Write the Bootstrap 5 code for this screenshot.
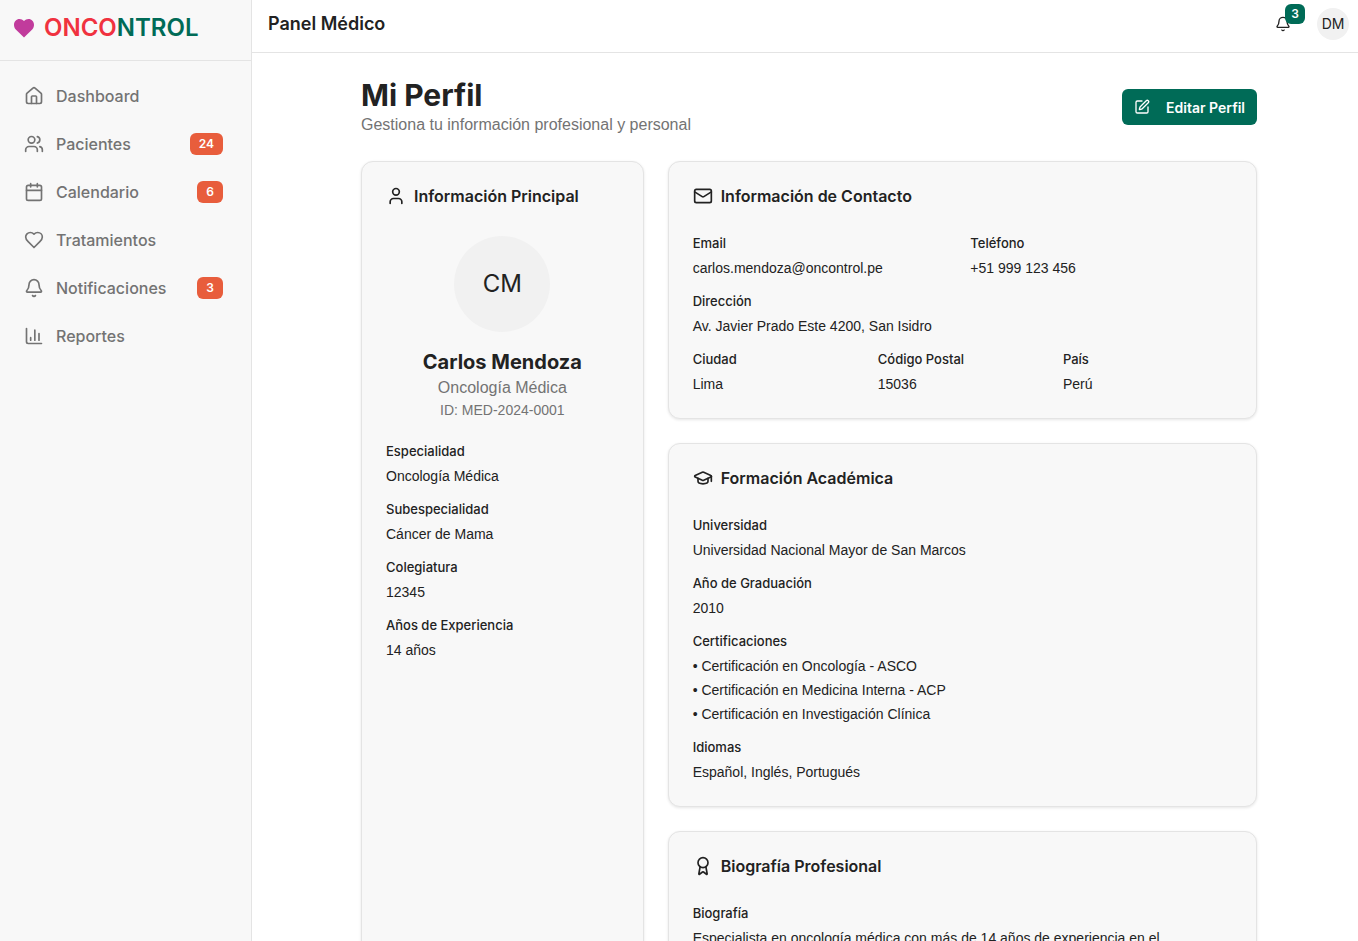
<!DOCTYPE html>
<html lang="es">
<head>
<meta charset="utf-8">
<meta name="viewport" content="width=device-width, initial-scale=1">
<title>Oncontrol · Mi Perfil</title>
<link href="https://cdn.jsdelivr.net/npm/bootstrap@5.3.0/dist/css/bootstrap.min.css" rel="stylesheet">
<style>
  :root { --ink:#222; --muted:#737373; --line:#e4e4e4; --panel:#f8f8f8; --brand:#006b57; --alert:#e85d3c; }
  body { font-family:"Liberation Sans",Arial,sans-serif; font-size:14px; line-height:20px; color:var(--ink); background:#fff; }
  h1,h2,h3,dt,.btn,.side-link,.count-pill,.logo-text { font-family:Inter,sans-serif; }
  .ico { width:20px; height:20px; flex:none; fill:none; stroke:currentColor; stroke-width:2; stroke-linecap:round; stroke-linejoin:round; }
  .ico-sm { width:16px; height:16px; }
  .sidebar { width:252px; flex:none; background:var(--panel); border-right:1px solid var(--line); }
  .logo-bar { height:61px; padding:0 12px 5px; border-bottom:1px solid var(--line); color:inherit; }
  .logo-text { font-size:24px; line-height:32px; font-weight:600; color:#f0323f; }
  .logo-text b { font-weight:inherit; color:var(--brand); }
  .side-nav { padding:15px 12px; gap:8px; }
  .side-link { height:40px; padding:0 16px 0 12px; gap:12px; font-size:16px; font-weight:500; color:var(--muted); text-decoration:none; border-radius:6px; }
  .count-pill { height:22px; padding:0 9px; font-size:12px; line-height:22px; font-weight:600; color:#fff; background:var(--alert); border-radius:6px; }
  .topbar { height:53px; padding:0 9px 5px 16px; border-bottom:1px solid var(--line); }
  .topbar h2 { font-size:18px; line-height:28px; font-weight:600; }
  .bell { width:36px; height:36px; color:var(--ink); }
  .bell .count-pill { position:absolute; top:-2px; right:-4px; height:20px; padding:0 6px; line-height:20px; background:var(--brand); }
  .avatar { background:#f1f1f1; color:var(--ink); }
  .avatar-sm { width:32px; height:32px; font-size:14px; font-family:Inter,sans-serif; }
  .avatar-lg { width:96px; height:96px; font-size:24px; font-family:Inter,sans-serif; }
  .content { padding:24px 16px 24px 24px; }
  .page-col { max-width:896px; }
  h1 { font-size:30px; line-height:36px; font-weight:700; }
  .subtitle { font-size:16px; line-height:24px; color:var(--muted); }
  .person-id { color:var(--muted); }
  .btn-edit { height:36px; padding:0 12px; gap:16px; font-size:14px; font-weight:600; color:#fff; background:var(--brand); border-radius:6px; }
  .btn-edit:hover { color:#fff; background:#005747; }
  .panel { background:var(--panel); border:1px solid var(--line); border-radius:12px; padding:24px; box-shadow:0 1px 3px rgba(0,0,0,.1); }
  .panel-title { font-size:16px; line-height:20px; font-weight:600; gap:8px; margin-bottom:27px; }
  .person { padding-top:3px; margin-bottom:21px; }
  .person h3 { font-size:20px; line-height:28px; font-weight:700; }
  dl { margin:0; }
  .stack { display:grid; gap:13px; }
  dt { font-size:13px; line-height:20px; font-weight:500; margin-bottom:5px; }
  dd { margin:0; }
  dd li + li { margin-top:4px; }
</style>
</head>
<body>
<div class="d-flex min-vh-100">
  <aside class="sidebar">
    <a href="#" class="logo-bar d-flex align-items-center gap-2 text-decoration-none">
      <svg width="24" height="24" viewBox="0 0 24 24" fill="#c13b9c" aria-hidden="true"><path d="M12 21.500 3.800 13.500C2.500 12.100 2 10.500 2 8.700 2 5.600 4.400 3 7.500 3 9.300 3 10.700 3.700 12 5c1.300-1.300 2.700-2 4.500-2C19.600 3 22 5.600 22 8.700c0 1.800-.5 3.400-1.800 4.800Z"/></svg>
      <span class="logo-text">ONCO<b>NTROL</b></span>
    </a>
    <nav class="side-nav d-flex flex-column">
      <a href="#" class="side-link d-flex align-items-center"><svg class="ico" viewBox="0 0 24 24"><path d="M15 21v-8a1 1 0 0 0-1-1h-4a1 1 0 0 0-1 1v8"/><path d="M3 10a2 2 0 0 1 .709-1.528l7-5.999a2 2 0 0 1 2.582 0l7 5.999A2 2 0 0 1 21 10v9a2 2 0 0 1-2 2H5a2 2 0 0 1-2-2z"/></svg>Dashboard</a>
      <a href="#" class="side-link d-flex align-items-center"><svg class="ico" viewBox="0 0 24 24"><path d="M16 21v-2a4 4 0 0 0-4-4H6a4 4 0 0 0-4 4v2"/><circle cx="9" cy="7" r="4"/><path d="M22 21v-2a4 4 0 0 0-3-3.870"/><path d="M16 3.130a4 4 0 0 1 0 7.750"/></svg>Pacientes<span class="count-pill ms-auto">24</span></a>
      <a href="#" class="side-link d-flex align-items-center"><svg class="ico" viewBox="0 0 24 24"><path d="M8 2v4M16 2v4M3 10h18"/><rect x="3" y="4" width="18" height="18" rx="2"/></svg>Calendario<span class="count-pill ms-auto">6</span></a>
      <a href="#" class="side-link d-flex align-items-center"><svg class="ico" viewBox="0 0 24 24"><path d="M19 14c1.490-1.460 3-3.210 3-5.500A5.500 5.500 0 0 0 16.500 3c-1.760 0-3 .5-4.500 2-1.500-1.500-2.740-2-4.500-2A5.500 5.500 0 0 0 2 8.500c0 2.300 1.500 4.050 3 5.500l7 7Z"/></svg>Tratamientos</a>
      <a href="#" class="side-link d-flex align-items-center"><svg class="ico" viewBox="0 0 24 24"><path d="M10.268 21a2 2 0 0 0 3.464 0"/><path d="M3.262 15.326A1 1 0 0 0 4 17h16a1 1 0 0 0 .740-1.673C19.410 13.956 18 12.499 18 8A6 6 0 0 0 6 8c0 4.499-1.411 5.956-2.738 7.326"/></svg>Notificaciones<span class="count-pill ms-auto">3</span></a>
      <a href="#" class="side-link d-flex align-items-center"><svg class="ico" viewBox="0 0 24 24"><path d="M3 3v16a2 2 0 0 0 2 2h16M18 17V9M13 17V5M8 17v-3"/></svg>Reportes</a>
    </nav>
  </aside>

  <div class="flex-grow-1">
    <header class="topbar d-flex align-items-center justify-content-between">
      <h2 class="m-0">Panel Médico</h2>
      <div class="d-flex align-items-center gap-3">
        <button type="button" class="bell btn p-0 border-0 position-relative d-flex align-items-center justify-content-center" aria-label="Notificaciones">
          <svg class="ico ico-sm" viewBox="0 0 24 24"><path d="M10.268 21a2 2 0 0 0 3.464 0"/><path d="M3.262 15.326A1 1 0 0 0 4 17h16a1 1 0 0 0 .740-1.673C19.410 13.956 18 12.499 18 8A6 6 0 0 0 6 8c0 4.499-1.411 5.956-2.738 7.326"/></svg>
          <span class="count-pill">3</span>
        </button>
        <button type="button" class="avatar avatar-sm btn p-0 border-0 rounded-circle">DM</button>
      </div>
    </header>

    <main class="content">
      <div class="page-col mx-auto">
        <div class="d-flex align-items-center justify-content-between mb-4">
          <div>
            <h1 class="m-0">Mi Perfil</h1>
            <p class="subtitle m-0">Gestiona tu información profesional y personal</p>
          </div>
          <button type="button" class="btn-edit btn border-0 d-flex align-items-center"><svg class="ico ico-sm" viewBox="0 0 24 24"><path d="M12 3H5a2 2 0 0 0-2 2v14a2 2 0 0 0 2 2h14a2 2 0 0 0 2-2v-7"/><path d="M18.375 2.625a1 1 0 0 1 3 3l-9.013 9.014a2 2 0 0 1-.853.505l-2.873.840a.5.5 0 0 1-.620-.620l.840-2.873a2 2 0 0 1 .506-.852z"/></svg>Editar Perfil</button>
        </div>

        <div class="row g-4">
          <div class="col-4">
            <section class="panel h-100">
              <h2 class="panel-title d-flex align-items-center"><svg class="ico" viewBox="0 0 24 24"><path d="M19 21v-2a4 4 0 0 0-4-4H9a4 4 0 0 0-4 4v2"/><circle cx="12" cy="7" r="4"/></svg>Información Principal</h2>
              <div class="person text-center">
                <div class="avatar avatar-lg rounded-circle d-flex align-items-center justify-content-center mx-auto mb-3">CM</div>
                <h3 class="m-0">Carlos Mendoza</h3>
                <p class="subtitle m-0">Oncología Médica</p>
                <p class="person-id m-0">ID: MED-2024-0001</p>
              </div>
              <dl class="stack">
                <div><dt>Especialidad</dt><dd>Oncología Médica</dd></div>
                <div><dt>Subespecialidad</dt><dd>Cáncer de Mama</dd></div>
                <div><dt>Colegiatura</dt><dd>12345</dd></div>
                <div><dt>Años de Experiencia</dt><dd>14 años</dd></div>
              </dl>
            </section>
          </div>

          <div class="col-8 d-flex flex-column gap-4">
            <section class="panel">
              <h2 class="panel-title d-flex align-items-center"><svg class="ico" viewBox="0 0 24 24"><path d="m22 7-8.991 5.727a2 2 0 0 1-2.009 0L2 7"/><rect x="2" y="4" width="20" height="16" rx="2"/></svg>Información de Contacto</h2>
              <dl class="stack">
                <div class="row gx-3">
                  <div class="col-6"><dt>Email</dt><dd>carlos.mendoza@oncontrol.pe</dd></div>
                  <div class="col-6"><dt>Teléfono</dt><dd>+51 999 123 456</dd></div>
                </div>
                <div><dt>Dirección</dt><dd>Av. Javier Prado Este 4200, San Isidro</dd></div>
                <div class="row gx-3">
                  <div class="col-4"><dt>Ciudad</dt><dd>Lima</dd></div>
                  <div class="col-4"><dt>Código Postal</dt><dd>15036</dd></div>
                  <div class="col-4"><dt>País</dt><dd>Perú</dd></div>
                </div>
              </dl>
            </section>

            <section class="panel">
              <h2 class="panel-title d-flex align-items-center"><svg class="ico" viewBox="0 0 24 24"><path d="M21.420 10.922a1 1 0 0 0-.019-1.838L12.830 5.180a2 2 0 0 0-1.660 0L2.600 9.080a1 1 0 0 0 0 1.832l8.570 3.908a2 2 0 0 0 1.660 0z"/><path d="M22 10v6"/><path d="M6 12.500V16a6 3 0 0 0 12 0v-3.500"/></svg>Formación Académica</h2>
              <dl class="stack">
                <div><dt>Universidad</dt><dd>Universidad Nacional Mayor de San Marcos</dd></div>
                <div><dt>Año de Graduación</dt><dd>2010</dd></div>
                <div><dt>Certificaciones</dt><dd>
                  <ul class="list-unstyled m-0">
                    <li>• Certificación en Oncología - ASCO</li>
                    <li>• Certificación en Medicina Interna - ACP</li>
                    <li>• Certificación en Investigación Clínica</li>
                  </ul></dd></div>
                <div><dt>Idiomas</dt><dd>Español, Inglés, Portugués</dd></div>
              </dl>
            </section>

            <section class="panel">
              <h2 class="panel-title d-flex align-items-center"><svg class="ico" viewBox="0 0 24 24"><path d="m15.477 12.890 1.515 8.526a.5.5 0 0 1-.810.470l-3.580-2.687a1 1 0 0 0-1.197 0l-3.586 2.686a.5.5 0 0 1-.810-.469l1.514-8.526"/><circle cx="12" cy="8" r="6"/></svg>Biografía Profesional</h2>
              <dl class="stack">
                <div><dt>Biografía</dt><dd>Especialista en oncología médica con más de 14 años de experiencia en el</dd></div>
              </dl>
            </section>
          </div>
        </div>
      </div>
    </main>
  </div>
</div>
<script src="https://cdn.jsdelivr.net/npm/bootstrap@5.3.0/dist/js/bootstrap.bundle.min.js"></script>
</body>
</html>
